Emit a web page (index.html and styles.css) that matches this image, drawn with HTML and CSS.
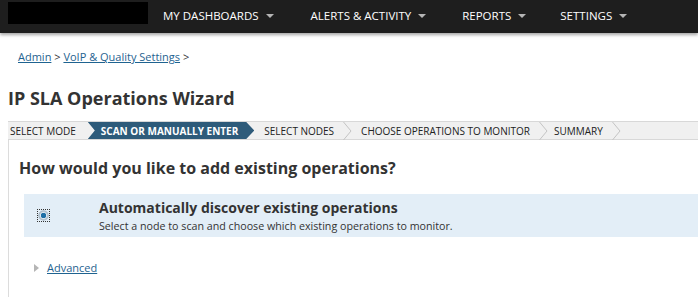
FILE: index.html
```html
<!DOCTYPE html>
<html>
<head>
<meta charset="utf-8">
<link rel="stylesheet" href="styles.css">
</head>
<body>
<header class="topbar">
  <div class="logo"></div>
  <nav class="menu">
    <span class="menu-item item-dash">MY DASHBOARDS <span class="caret"></span></span>
    <span class="menu-item item-alerts">ALERTS &amp; ACTIVITY <span class="caret"></span></span>
    <span class="menu-item item-reports">REPORTS <span class="caret"></span></span>
    <span class="menu-item item-settings">SETTINGS <span class="caret"></span></span>
  </nav>
</header>
<div class="breadcrumb"><a href="#">Admin</a> &gt; <a href="#">VoIP &amp; Quality Settings</a> &gt;</div>
<h1 class="title">IP SLA Operations Wizard</h1>
<div class="steps">
  <div class="step first">SELECT MODE</div>
  <div class="step active">SCAN OR MANUALLY ENTER</div>
  <div class="step">SELECT NODES<svg class="chev" width="9" height="18" viewBox="0 0 9 18"><polyline points="0.5,0 8,9 0.5,18" fill="none" stroke="#c4c4c4" stroke-width="1"/></svg></div>
  <div class="step">CHOOSE OPERATIONS TO MONITOR<svg class="chev" width="9" height="18" viewBox="0 0 9 18"><polyline points="0.5,0 8,9 0.5,18" fill="none" stroke="#c4c4c4" stroke-width="1"/></svg></div>
  <div class="step last">SUMMARY<svg class="chev" width="9" height="18" viewBox="0 0 9 18"><polyline points="0.5,0 8,9 0.5,18" fill="none" stroke="#c4c4c4" stroke-width="1"/></svg></div>
</div>
<main class="content">
  <h2 class="question">How would you like to add existing operations?</h2>
  <div class="option">
    <div class="radio-wrap"><span class="radio"><span class="dot"></span></span></div>
    <div class="option-text">
      <div class="option-title">Automatically discover existing operations</div>
      <div class="option-desc">Select a node to scan and choose which existing operations to monitor.</div>
    </div>
  </div>
  <div class="advanced"><span class="tri"></span><a href="#">Advanced</a></div>
</main>
</body>
</html>
```
FILE: styles.css
```css
html, body {
  margin: 0;
  padding: 0;
  background: #fff;
  font-family: "Open Sans", "DejaVu Sans", sans-serif;
  color: #333;
}
.topbar {
  height: 33px;
  background: #1e1e1e;
  display: flex;
  align-items: flex-start;
  box-shadow: 0 2px 3px rgba(0,0,0,0.35);
  position: relative;
}
.logo {
  width: 140px;
  height: 22px;
  background: #000;
  margin: 2px 0 0 8px;
}
.menu {
  display: flex;
  height: 33px;
  align-items: center;
  margin-left: 15px;
}
.menu-item {
  color: #fff;
  font-size: 11.5px;
  display: flex;
  align-items: center;
  margin-top: -2px;
}
.item-alerts { margin-left: 37px; }
.item-reports { margin-left: 36px; }
.item-settings { margin-left: 34px; }
.caret {
  display: inline-block;
  width: 0;
  height: 0;
  border-left: 4px solid transparent;
  border-right: 4px solid transparent;
  border-top: 4px solid #b5b5b5;
  margin-left: 7px;
}
.breadcrumb {
  font-size: 11px;
  color: #333;
  margin: 16px 0 0 18px;
  height: 16px;
  line-height: 16px;
}
.breadcrumb a { color: #1f6390; }
.title {
  font-size: 18px;
  font-weight: 700;
  margin: 21px 0 0 8px;
  line-height: 24px;
  color: #333;
}
.steps {
  margin: 11px 0 0 8px;
  height: 17px;
  background: #f0f0f0;
  border-top: 1px solid #d8d8d8;
  border-bottom: 1px solid #d8d8d8;
  display: flex;
  align-items: stretch;
  font-size: 10px;
  color: #222;
}
.step {
  display: flex;
  align-items: center;
  position: relative;
  padding-left: 9px;
  padding-right: 18px;
  white-space: nowrap;
}
.step.first {
  padding-left: 2px;
  padding-right: 12px;
}
.step.last { padding-left: 6px; }
.chev {
  position: absolute;
  right: 0;
  top: -0.5px;
}
.step.active {
  background: #2e5b7a;
  color: #fff;
  font-weight: 700;
  padding-left: 13px;
  padding-right: 16px;
  clip-path: polygon(0 0, calc(100% - 8px) 0, 100% 50%, calc(100% - 8px) 100%, 0 100%, 7px 50%);
}
.step.active + .step { padding-left: 10px; }
.content {
  margin-left: 8px;
  border-left: 1px solid #dcdcdc;
  padding: 18px 0 30px 0;
}
.question {
  font-size: 16px;
  font-weight: 700;
  margin: 0 0 0 10px;
  line-height: 20px;
  color: #333;
}
.option {
  margin: 16px 0 0 15px;
  height: 43px;
  background: #e3eef7;
  display: flex;
  align-items: center;
}
.radio-wrap {
  width: 75px;
  display: flex;
  justify-content: flex-start;
  padding-left: 13px;
  box-sizing: border-box;
}
.radio {
  width: 11px;
  height: 11px;
  border: 1px dotted #333;
  display: flex;
  align-items: center;
  justify-content: center;
}
.dot {
  width: 9px;
  height: 9px;
  border-radius: 50%;
  background: radial-gradient(circle at 50% 50%, #1f6fa6 0, #1f6fa6 2.5px, #dfe9f1 3px, #9eb0c0 4.5px);
  box-shadow: 0 0 0 0.5px #8a9aa8;
}
.option-text {
  display: flex;
  flex-direction: column;
  margin-top: 1px;
}
.option-title {
  font-size: 14px;
  font-weight: 700;
  line-height: 18px;
  color: #333;
}
.option-desc {
  font-size: 10.7px;
  line-height: 16px;
  margin-top: 1px;
  color: #333;
}
.advanced {
  margin: 23px 0 0 25px;
  display: flex;
  align-items: center;
  font-size: 11px;
}
.advanced a { color: #1f6390; }
.tri {
  width: 0;
  height: 0;
  border-top: 4px solid transparent;
  border-bottom: 4px solid transparent;
  border-left: 5px solid #b5b5b5;
  margin-right: 8px;
}
```
